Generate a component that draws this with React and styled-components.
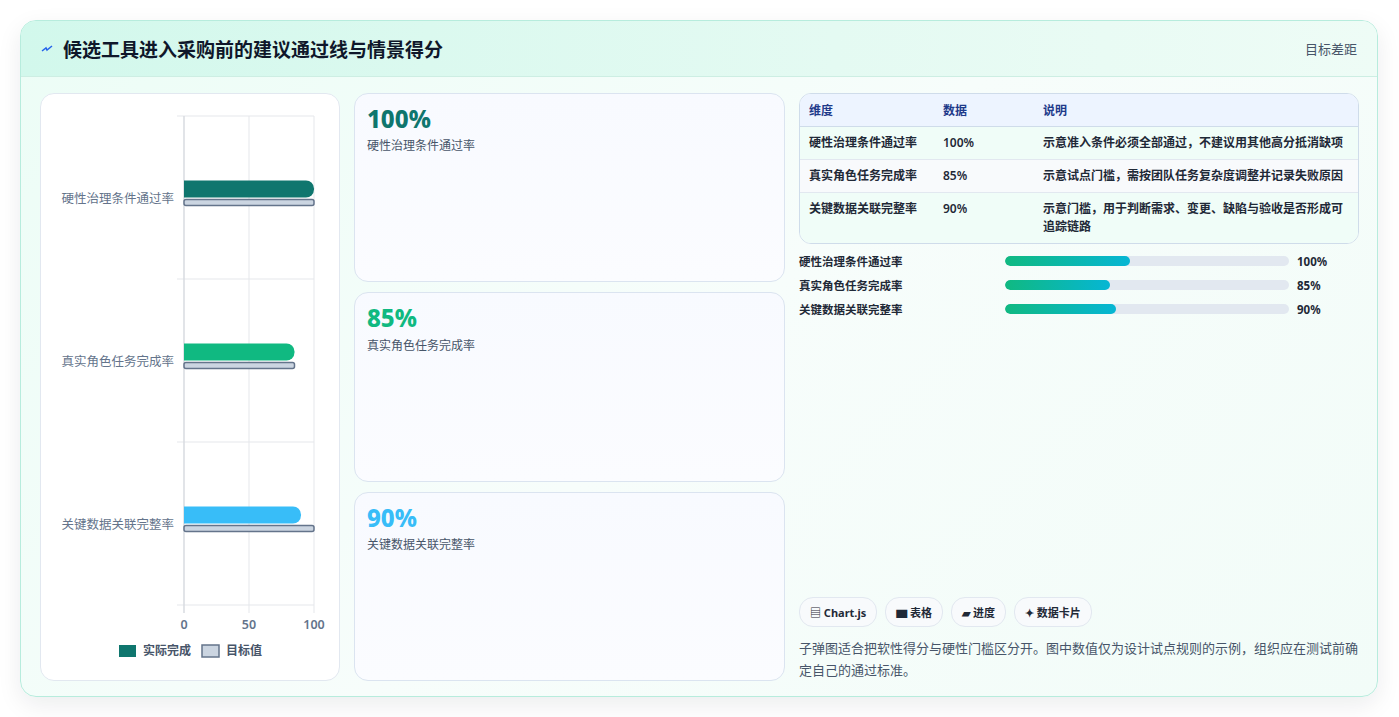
import React from "react";
import styled, {createGlobalStyle} from "styled-components";

const Global = createGlobalStyle`
    body {
        margin: 0;
        background: #ffffff;
        font-family: "Noto Sans", "Noto Sans CJK SC", sans-serif;
    }
`;

const Page_SC = styled.div`
    padding: 20px 21px 20px 20px;
`;

const Frame_SC = styled.div`
    height: 675px;
    border: 1px solid #b7ecdd;
    border-radius: 16px;
    background: linear-gradient(135deg, #ecfdf6 0%, #f7fdfb 50%, #f2fcf8 100%);
    box-shadow: 0 8px 24px rgba(15, 23, 42, 0.08);
    overflow: hidden;
    display: flex;
    flex-direction: column;
`;

const Header_SC = styled.div`
    height: 55px;
    flex: none;
    display: flex;
    align-items: center;
    justify-content: space-between;
    padding: 0 20px;
    background: linear-gradient(90deg, #d2f8ec 0%, #e4faf2 60%, #eefcf6 100%);
    border-bottom: 1px solid #cdeee3;

    h1 {
        margin: 0;
        font-size: 19px;
        font-weight: 700;
        color: #0f172a;
        display: flex;
        align-items: center;
        gap: 10px;
    }
    span {
        font-size: 13px;
        color: #475569;
    }
`;

const Body_SC = styled.div`
    flex: 1;
    display: grid;
    grid-template-columns: 300px 431px 1fr;
    gap: 14px;
    padding: 16px 18px 16px 19px;
    min-height: 0;
`;

const ChartCard_SC = styled.div`
    background: #fff;
    border: 1px solid #e2e8f0;
    border-radius: 14px;
`;

const Cards_SC = styled.div`
    display: grid;
    grid-template-rows: repeat(3, 1fr);
    gap: 10px;
`;

const StatCard_SC = styled.div`
    background: linear-gradient(180deg, #f8faff 0%, #fbfcff 100%);
    border: 1px solid #dbe4f0;
    border-radius: 14px;
    padding: 12px 12px;

    b {
        display: block;
        font-size: 24px;
        font-weight: 800;
        line-height: 1.1;
        color: ${p => p.color};
    }
    small {
        display: block;
        margin-top: 4px;
        font-size: 12px;
        color: #475569;
    }
`;

const Right_SC = styled.div`
    display: flex;
    flex-direction: column;
`;

const Table_SC = styled.table`
    width: 100%;
    border-collapse: separate;
    border-spacing: 0;
    border: 1px solid #cfdcea;
    border-radius: 12px;
    overflow: hidden;
    font-size: 12px;
    background: #fff;

    th {
        text-align: left;
        font-weight: 700;
        color: #1e3a8a;
        background: #edf4ff;
        padding: 7px 9px;
        border-bottom: 1px solid #cfdcea;
    }
    td {
        padding: 7px 9px;
        color: #1f2937;
        font-weight: 600;
        vertical-align: top;
        line-height: 18px;
    }
    tr:nth-child(odd) td { background: #f0fdf8; }
    tr:nth-child(even) td { background: #f8fafc; }
    tr:not(:last-child) td { border-bottom: 1px solid #e2e8f0; }
`;

const Bars_SC = styled.div`
    margin-top: 9px;
    display: flex;
    flex-direction: column;
    gap: 8px;
`;

const BarRow_SC = styled.div`
    display: grid;
    grid-template-columns: 206px 284px 1fr;
    align-items: center;
    font-size: 11.5px;
    font-weight: 600;
    color: #1f2937;
    height: 16px;

    strong { padding-left: 8px; font-weight: 700; }
`;

const Track_SC = styled.div`
    height: 10px;
    border-radius: 5px;
    background: #e2e8f0;
    overflow: hidden;
`;

const Fill_SC = styled.div`
    height: 100%;
    border-radius: 5px;
    background: linear-gradient(90deg, #10b981, #06b6d4);
`;

const Footer_SC = styled.div`
    margin-top: auto;
`;

const Chips_SC = styled.div`
    display: flex;
    gap: 8px;
`;

const Chip_SC = styled.span`
    display: inline-flex;
    align-items: center;
    gap: 4px;
    height: 28px;
    padding: 0 10px;
    border: 1px solid #e2e8f0;
    border-radius: 14px;
    background: #f8fafc;
    font-size: 11px;
    font-weight: 700;
    color: #1f2937;
`;

const Note_SC = styled.p`
    margin: 10px 0 0;
    font-size: 13px;
    line-height: 22px;
    color: #475569;
`;

const rows = [
    {name: "硬性治理条件通过率", v: 100, t: 100, fill: "#0f766e", desc: "示意准入条件必须全部通过，不建议用其他高分抵消缺项", w: 44},
    {name: "真实角色任务完成率", v: 85, t: 85, fill: "#10b981", desc: "示意试点门槛，需按团队任务复杂度调整并记录失败原因", w: 37},
    {name: "关键数据关联完整率", v: 90, t: 100, fill: "#38bdf8", desc: "示意门槛，用于判断需求、变更、缺陷与验收是否形成可追踪链路", w: 39},
];

const Chart = () => {
    const x0 = 143, x1 = 273, top = 22, band = 163;
    const sx = v => x0 + (x1 - x0) * v / 100;
    return (
        <svg width="300" height="586" style={{display: "block"}}>
            {[0, 50, 100].map(v => (
                <line key={v} x1={sx(v)} x2={sx(v)} y1={top} y2={top + band * 3 + 8} stroke="#e5e7eb" />
            ))}
            {[0, 1, 2, 3].map(i => (
                <line key={i} x1={x0 - 7} x2={x1} y1={top + band * i} y2={top + band * i} stroke="#e5e7eb" />
            ))}
            <line x1={x0} x2={x0} y1={top} y2={top + band * 3 + 8} stroke="#d1d5db" />
            {rows.map((r, i) => {
                const cy = top + band * i + band / 2;
                return (
                    <g key={r.name}>
                        <text x={x0 - 10} y={cy + 5} textAnchor="end" fontSize="12.5" fill="#64748b">{r.name}</text>
                        <path d={`M${x0} ${cy - 17} H${sx(r.v) - 8} a8 8 0 0 1 8 8 v1 a8 8 0 0 1 -8 8 H${x0} Z`} fill={r.fill} />
                        <rect x={x0} y={cy + 2} width={sx(r.t) - x0} height="6" rx="2" fill="#cbd5e1" stroke="#64748b" strokeWidth="1.5" />
                    </g>
                );
            })}
            {[0, 50, 100].map(v => (
                <text key={v} x={sx(v)} y={535} textAnchor="middle" fontSize="12.5" fontWeight="600" fill="#64748b">{v}</text>
            ))}
            <rect x="78" y="551" width="17" height="12" fill="#0f766e" />
            <text x="102" y="561" fontSize="12" fontWeight="600" fill="#475569">实际完成</text>
            <rect x="161" y="551" width="17" height="12" fill="#cbd5e1" stroke="#64748b" strokeWidth="1.5" />
            <text x="185" y="561" fontSize="12" fontWeight="600" fill="#475569">目标值</text>
        </svg>
    );
};

const App = () => (
    <Page_SC>
        <Global />
        <Frame_SC>
            <Header_SC>
                <h1>
                    <svg width="12" height="10" viewBox="0 0 12 10"><path d="M1 7 L5 4 L6 6 L11 2" stroke="#2563eb" strokeWidth="1.5" fill="none" /></svg>
                    候选工具进入采购前的建议通过线与情景得分
                </h1>
                <span>目标差距</span>
            </Header_SC>
            <Body_SC>
                <ChartCard_SC><Chart /></ChartCard_SC>
                <Cards_SC>
                    {rows.map(r => (
                        <StatCard_SC key={r.name} color={r.fill}>
                            <b>{r.v}%</b>
                            <small>{r.name}</small>
                        </StatCard_SC>
                    ))}
                </Cards_SC>
                <Right_SC>
                    <Table_SC>
                        <thead>
                            <tr><th style={{width: 116}}>维度</th><th style={{width: 82}}>数据</th><th>说明</th></tr>
                        </thead>
                        <tbody>
                            {rows.map(r => (
                                <tr key={r.name}><td>{r.name}</td><td>{r.v}%</td><td>{r.desc}</td></tr>
                            ))}
                        </tbody>
                    </Table_SC>
                    <Bars_SC>
                        {rows.map(r => (
                            <BarRow_SC key={r.name}>
                                <span>{r.name}</span>
                                <Track_SC><Fill_SC style={{width: `${r.w}%`}} /></Track_SC>
                                <strong>{r.v}%</strong>
                            </BarRow_SC>
                        ))}
                    </Bars_SC>
                    <Footer_SC>
                        <Chips_SC>
                            <Chip_SC>▤ Chart.js</Chip_SC>
                            <Chip_SC>▆ 表格</Chip_SC>
                            <Chip_SC>▰ 进度</Chip_SC>
                            <Chip_SC>✦ 数据卡片</Chip_SC>
                        </Chips_SC>
                        <Note_SC>子弹图适合把软性得分与硬性门槛区分开。图中数值仅为设计试点规则的示例，组织应在测试前确定自己的通过标准。</Note_SC>
                    </Footer_SC>
                </Right_SC>
            </Body_SC>
        </Frame_SC>
    </Page_SC>
);

export default App;
